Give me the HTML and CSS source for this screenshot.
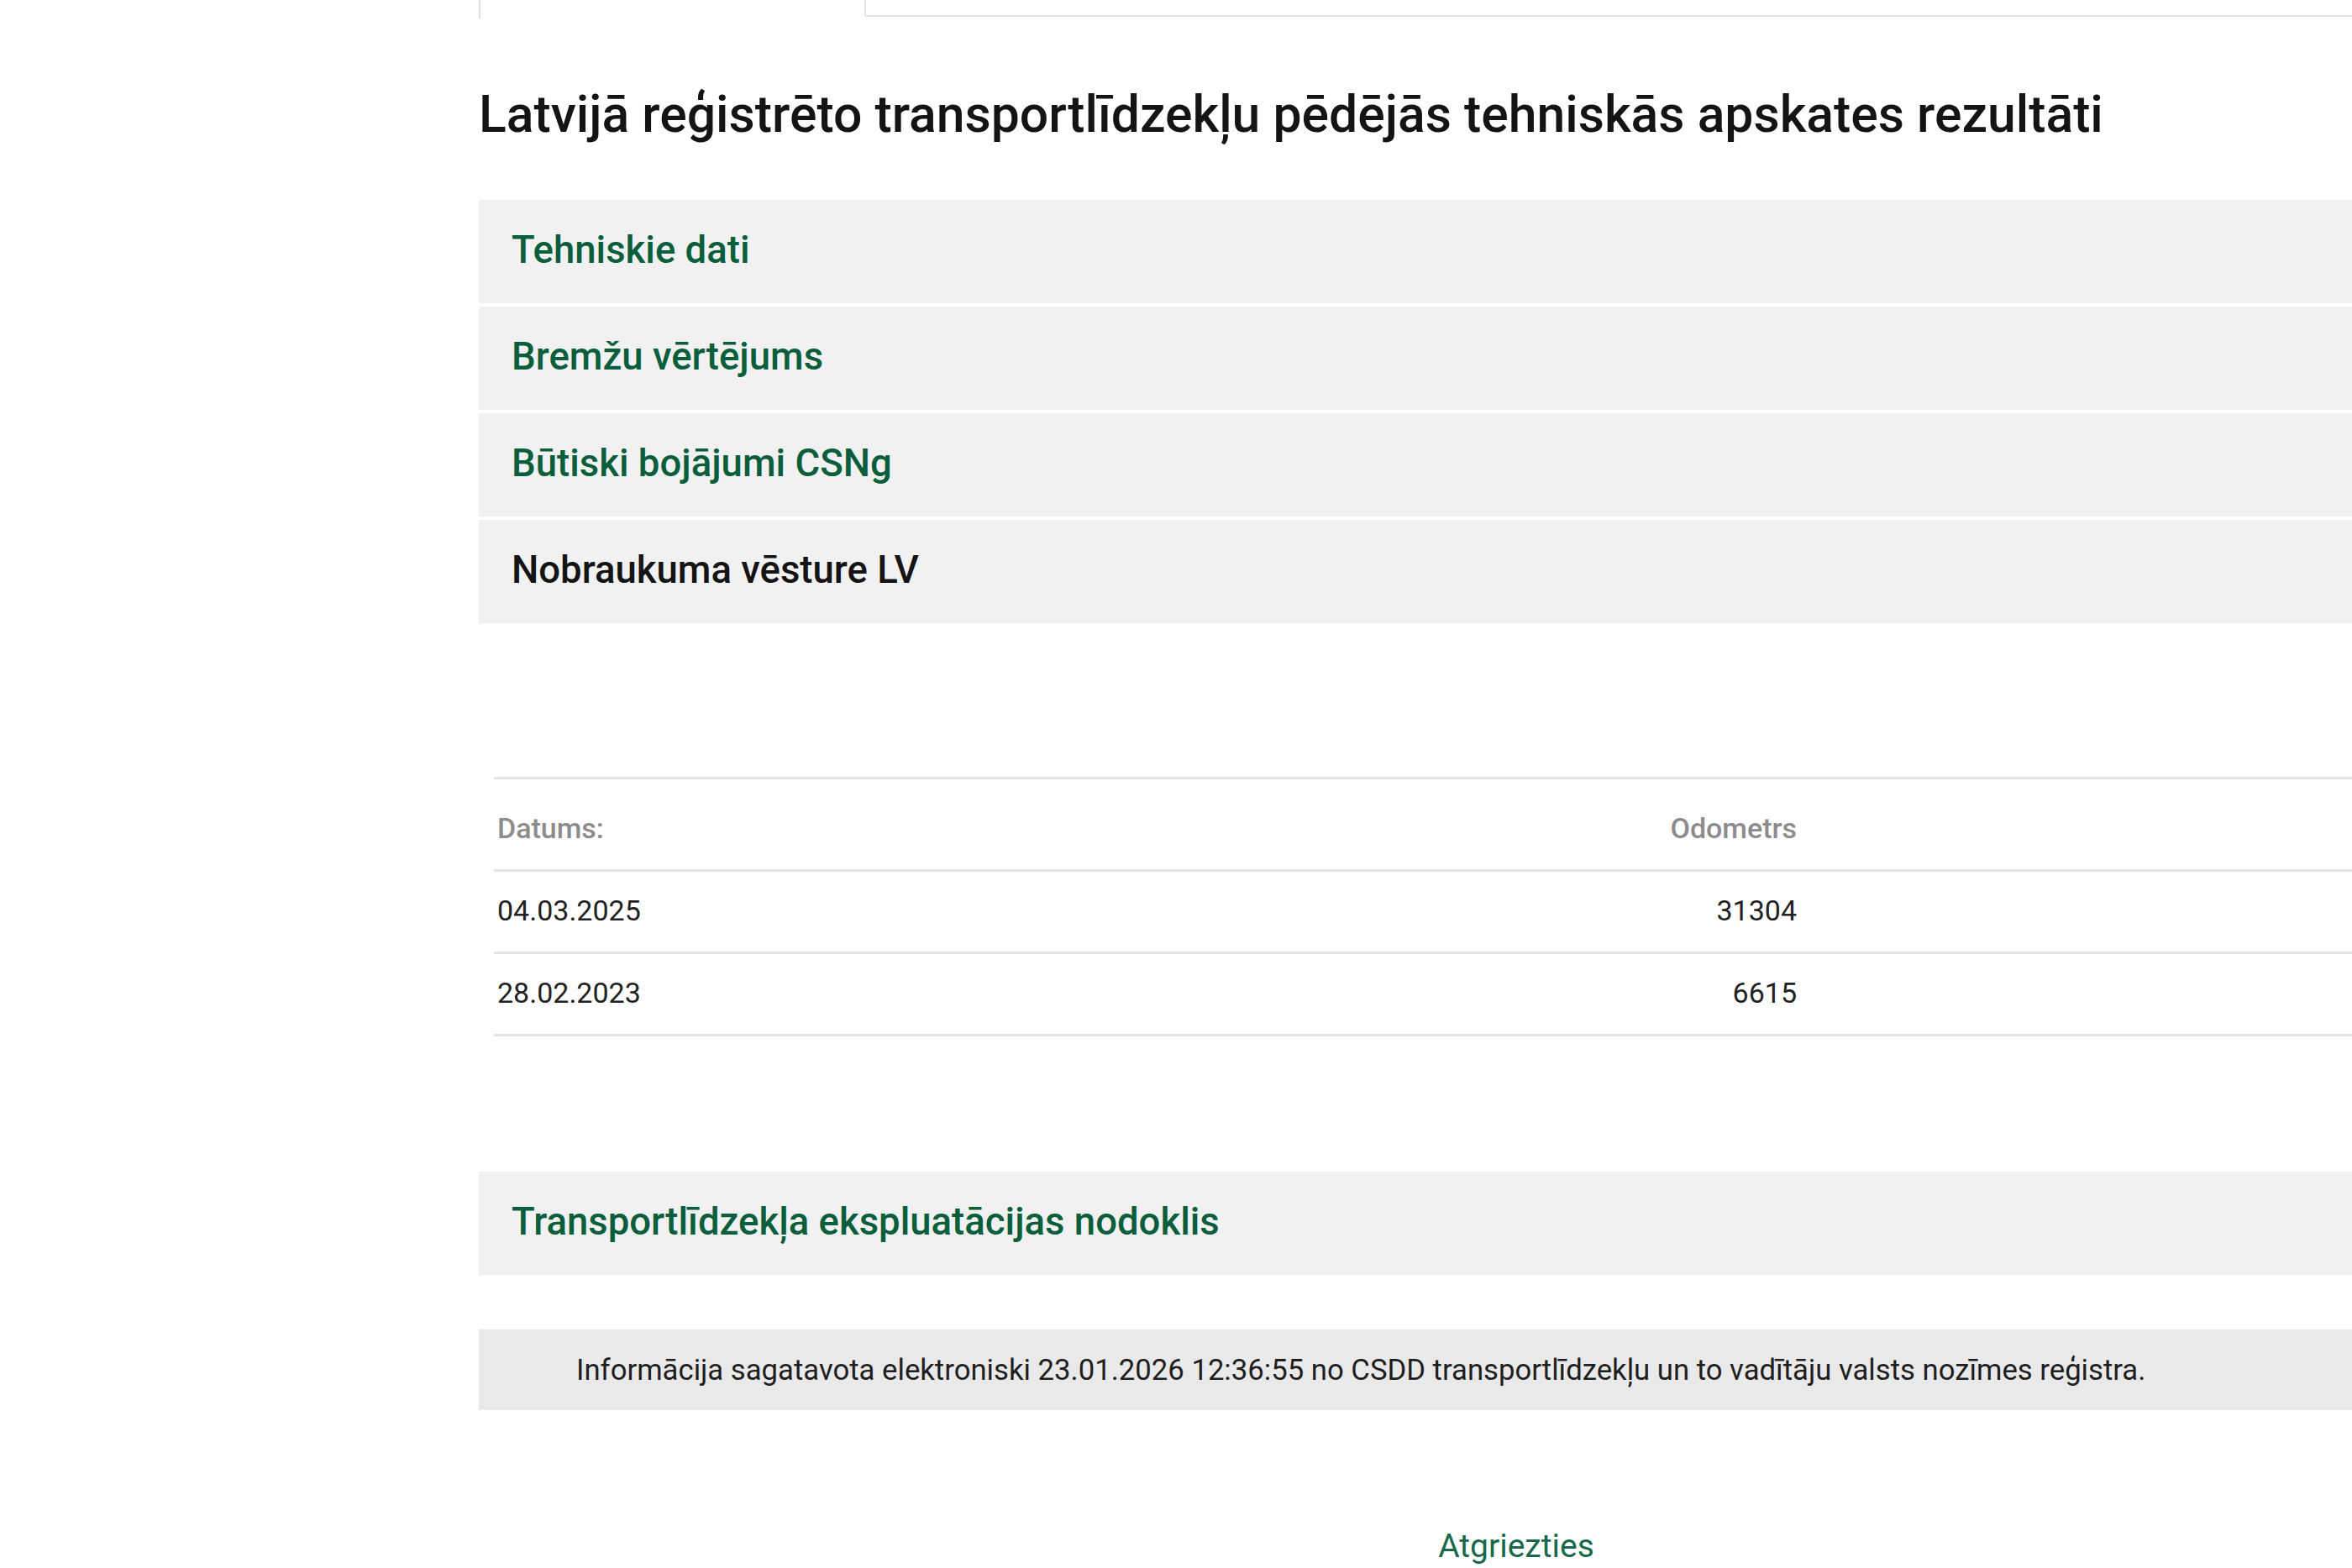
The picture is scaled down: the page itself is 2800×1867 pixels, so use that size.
FILE: index.html
```html
<!DOCTYPE html>
<html lang="lv">
<head>
  <meta charset="UTF-8">
  <meta name="viewport" content="width=device-width, initial-scale=1.0">
  <title>Tehniskās apskates rezultāti</title>
  <link rel="stylesheet" href="styles.css">
</head>
<body>
  <div class="page">
    <div class="tabs">
      <div class="tab active"></div>
      <div class="tab rest"></div>
    </div>

    <h1 class="title">Latvijā reģistrēto transportlīdzekļu pēdējās tehniskās apskates rezultāti</h1>

    <div class="accordion">
      <div class="acc-item">
        <div class="acc-head">Tehniskie dati</div>
      </div>
      <div class="acc-item">
        <div class="acc-head">Bremžu vērtējums</div>
      </div>
      <div class="acc-item">
        <div class="acc-head">Būtiski bojājumi CSNg</div>
      </div>
      <div class="acc-item open">
        <div class="acc-head">Nobraukuma vēsture LV</div>
        <div class="acc-body">
          <table class="mileage">
            <colgroup>
              <col class="col-date">
              <col class="col-odo">
              <col>
            </colgroup>
            <thead>
              <tr>
                <th>Datums:</th>
                <th class="num">Odometrs</th>
                <th></th>
              </tr>
            </thead>
            <tbody>
              <tr>
                <td>04.03.2025</td>
                <td class="num">31304</td>
                <td></td>
              </tr>
              <tr>
                <td>28.02.2023</td>
                <td class="num">6615</td>
                <td></td>
              </tr>
            </tbody>
          </table>
        </div>
      </div>
      <div class="acc-item tax">
        <div class="acc-head">Transportlīdzekļa ekspluatācijas nodoklis</div>
      </div>
    </div>

    <div class="info">Informācija sagatavota elektroniski 23.01.2026 12:36:55 no CSDD transportlīdzekļu un to vadītāju valsts nozīmes reģistra.</div>

    <div class="back"><a href="#">Atgriezties</a></div>
  </div>
</body>
</html>
```

FILE: styles.css
```css
html, body {
  margin: 0;
  overflow: hidden;
  background: #ffffff;
}
body {
  font-family: Roboto, "Noto Sans", Arial, sans-serif;
  color: #1a1a1a;
}
.page {
  width: 2470px;
  margin-left: 570px;
}
.tabs {
  display: flex;
  height: 22px;
}
.tab.active {
  width: 457px;
  border-left: 2px solid #dedede;
}
.tab.rest {
  flex: 1;
  height: 18px;
  border-left: 2px solid #e2e2e2;
  border-bottom: 2px solid #e2e2e2;
  border-bottom-left-radius: 3px;
}
.title {
  font-size: 60.7px;
  font-weight: 500;
  line-height: 72px;
  margin: 79px 0 65px;
  color: #141414;
}
.acc-item {
  margin-bottom: 4px;
}
.acc-head {
  display: flex;
  align-items: center;
  box-sizing: border-box;
  height: 123px;
  padding: 0 0 5px 39px;
  background: #f1f1f1;
  font-size: 45.5px;
  font-weight: 500;
  color: #0b5e3b;
}
.acc-item.open .acc-head {
  color: #141414;
}
.acc-body {
  padding: 183px 18px 0;
}
.mileage {
  width: 100%;
  border-collapse: collapse;
  table-layout: fixed;
  font-size: 34px;
  line-height: 40px;
}
.col-date {
  width: 712px;
}
.col-odo {
  width: 843px;
}
.mileage thead tr {
  border-top: 3px solid #e4e4e4;
}
.mileage tr {
  border-bottom: 3px solid #e4e4e4;
}
.mileage th {
  text-align: left;
  font-weight: 500;
  color: #8c8c8c;
  padding: 38px 4px 29px;
}
.mileage td {
  color: #222222;
  padding: 26px 4px 29px;
}
.mileage .num {
  text-align: right;
}
.acc-item.tax {
  margin-top: 161px;
}
.info {
  display: flex;
  align-items: center;
  height: 96px;
  margin-top: 65px;
  padding-left: 116px;
  background: #e9e9e9;
  font-size: 34.7px;
  color: #1e1e1e;
}
.back {
  text-align: center;
  margin-top: 139px;
  font-size: 39px;
  line-height: 46px;
}
.back a {
  color: #17694a;
  text-decoration: none;
}
```
